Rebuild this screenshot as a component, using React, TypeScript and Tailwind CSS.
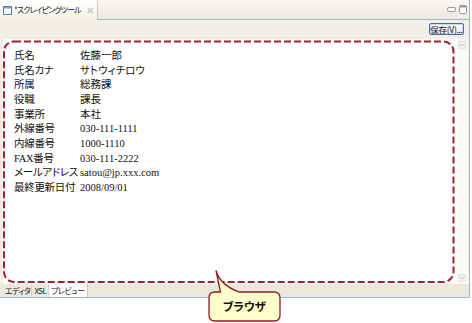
import React from "react";

const rows: [string, string][] = [
  ["氏名", "佐藤一郎"],
  ["氏名カナ", "サトウィチロウ"],
  ["所属", "総務課"],
  ["役職", "課長"],
  ["事業所", "本社"],
  ["外線番号", "030-111-1111"],
  ["内線番号", "1000-1110"],
  ["FAX番号", "030-111-2222"],
  ["メールアドレス", "satou@jp.xxx.com"],
  ["最終更新日付", "2008/09/01"],
];

const ui = { fontFamily: '"Noto Sans CJK JP", "Noto Sans", sans-serif', fontFeatureSettings: '"palt"' } as React.CSSProperties;
const serif = { fontFamily: '"Liberation Serif", "Noto Sans CJK JP", serif', fontFeatureSettings: '"palt"' } as React.CSSProperties;

export default function App() {
  return (
    <div className="relative w-[472px] h-[323px] bg-white overflow-hidden" style={ui}>
      <div className="w-[470px] h-[298px] border-r border-b border-[#9db6d6] flex flex-col bg-[#f2f0e6]">
        {/* title bar */}
        <div className="h-[20px] flex bg-gradient-to-b from-[#f8f7f1] to-[#ebe8dc]">
          <div className="w-[98px] flex items-center pl-[3px] bg-gradient-to-b from-white to-[#f4f2ea] border-r border-[#c8c5b4] rounded-tr-[3px]">
            <svg width="9" height="9" viewBox="0 0 9 9" className="shrink-0">
              <rect x="0.5" y="0.5" width="8" height="8" fill="#fff" stroke="#5a7fa8" />
              <rect x="1" y="1" width="7" height="1.5" fill="#7fa3cc" />
            </svg>
            <span className="ml-[2px] text-[8px] leading-none text-[#222] tracking-[-0.9px] whitespace-nowrap">*スクレイピングツール</span>
            <svg width="7" height="7" viewBox="0 0 7 7" className="ml-[6px] shrink-0">
              <path d="M1 1 L6 6 M6 1 L1 6" stroke="#b8b6ae" strokeWidth="1.6" fill="none" />
              <path d="M1 1 L6 6 M6 1 L1 6" stroke="#f4f3ee" strokeWidth="0.5" fill="none" />
            </svg>
          </div>
          <div className="flex-1 flex justify-end items-center gap-[3px] pr-[2px] border-b border-[#9db6d6]">
            <svg width="9" height="5" viewBox="0 0 9 5">
              <rect x="0.5" y="0.5" width="8" height="4" rx="1.5" fill="#fff" stroke="#9a9890" />
            </svg>
            <svg width="8" height="9" viewBox="0 0 8 9">
              <rect x="0.5" y="0.5" width="7" height="8" rx="1" fill="#fff" stroke="#9a9890" />
              <rect x="1" y="1" width="6" height="1.5" fill="#9a9890" />
            </svg>
          </div>
        </div>
        {/* toolbar */}
        <div className="h-[19px] flex justify-end items-start pt-[3px] pr-[5px]">
          <div className="h-[12px] w-[35px] flex items-center justify-center border border-[#3f70b3] rounded-[2px] bg-gradient-to-b from-white to-[#ecebe4] shadow-[inset_0_0_0_1px_#c9d8ee]">
            <span className="text-[8.5px] leading-none text-[#111] tracking-[-0.3px] whitespace-nowrap">保存(V)...</span>
          </div>
        </div>
        {/* browser */}
        <div className="h-[245px] ml-[3px] mr-[1px] flex bg-white">
          <div className="flex-1 pl-[11px] pt-[10px] text-[10.5px] leading-[14.67px] text-[#111]" style={serif}>
            {rows.map(([k, v]) => (
              <div key={k} className="flex whitespace-nowrap">
                <span className="w-[66px] shrink-0 tracking-[-0.3px]">{k}</span>
                <span>{v}</span>
              </div>
            ))}
          </div>
          <div className="w-[11px] flex flex-col justify-between py-[2px] bg-[#fbfaf7]">
            <div className="w-[8px] h-[8px] ml-[1px] border border-[#e3e1d8] bg-[#f3f2ec] flex items-center justify-center">
              <svg width="6" height="4" viewBox="0 0 6 4"><path d="M0.5 3.5 L3 1 L5.5 3.5" stroke="#c4c2b8" strokeWidth="1" fill="none" /></svg>
            </div>
            <div className="w-[8px] h-[8px] ml-[1px] border border-[#e3e1d8] bg-[#f3f2ec] flex items-center justify-center">
              <svg width="6" height="4" viewBox="0 0 6 4"><path d="M0.5 0.5 L3 3 L5.5 0.5" stroke="#c4c2b8" strokeWidth="1" fill="none" /></svg>
            </div>
          </div>
        </div>
        {/* bottom tabs */}
        <div className="flex-1 flex items-stretch pl-[4px] bg-[#ece9dc]">
          <div className="px-[1px] flex items-center border-r border-[#d6d3c4] text-[8px] leading-none tracking-[-0.6px] text-[#222]">エディタ</div>
          <div className="px-[2px] flex items-center border-r border-[#d6d3c4] text-[8px] leading-none tracking-[-0.6px] text-[#222]">XSL</div>
          <div className="px-[2px] flex items-center bg-white border-r border-[#c8c5b4] text-[8px] leading-none tracking-[-0.6px] text-[#222]">プレビュー</div>
        </div>
      </div>

      {/* dashed annotation */}
      <svg className="absolute left-0 top-0 pointer-events-none" width="472" height="323">
        <rect x="4" y="41.5" width="449.5" height="240.5" rx="10" fill="none" stroke="#9b2335" strokeWidth="2" strokeDasharray="7 3" />
      </svg>

      {/* callout */}
      <div className="absolute left-[207px] top-[268px] w-[76px] h-[55px]">
        <svg className="absolute inset-0" width="76" height="55" viewBox="0 0 76 55">
          <path
            d="M8 24 L13.5 24 L9 2.5 Q13 17 32 24 L67 24 Q73 24 73 30 L73 47 Q73 53 67 53 L8 53 Q2 53 2 47 L2 30 Q2 24 8 24 Z"
            fill="#ffffcc"
            stroke="#8b1c26"
            strokeWidth="1.3"
          />
        </svg>
        <div className="absolute left-[2px] top-[24px] w-[71px] h-[29px] flex items-center justify-center text-[11.5px] font-bold text-[#111]">
          ブラウザ
        </div>
      </div>
    </div>
  );
}
